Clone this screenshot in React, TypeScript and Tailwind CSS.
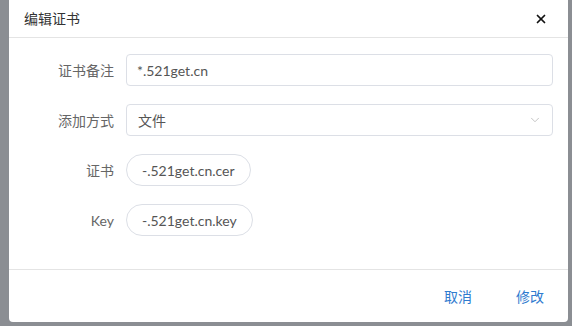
import { ChevronDown, X } from "lucide-react";

const font = { fontFamily: 'Lato, "Noto Sans CJK SC", sans-serif' };

function Label({ children }: { children: React.ReactNode }) {
  return (
    <div className="w-[117px] shrink-0 pr-[12px] text-right text-[14px] text-[#666]">
      {children}
    </div>
  );
}

export default function App() {
  return (
    <div className="h-[326px] w-[572px] bg-[#8b8e93] pl-[9px] pr-[4px]" style={font}>
      <div className="flex h-[322px] flex-col rounded-b-[4px] bg-white">
        <div className="flex h-[38px] items-center justify-between border-b border-[#e4e4e4] pl-[15px] pr-[20px]">
          <span className="text-[14px] text-[#333]">编辑证书</span>
          <X className="h-[14px] w-[14px] text-[#111]" strokeWidth={3} />
        </div>
        <div className="flex flex-1 flex-col gap-[18px] pt-[16px] pr-[15px]">
          <div className="flex items-center">
            <Label>证书备注</Label>
            <div className="flex h-[32px] flex-1 items-center rounded-[4px] border border-[#dcdfe6] px-[10px] text-[14px] text-[#555]">
              *.521get.cn
            </div>
          </div>
          <div className="flex items-center">
            <Label>添加方式</Label>
            <div className="flex h-[32px] flex-1 items-center justify-between rounded-[4px] border border-[#dcdfe6] pl-[11px] pr-[10px] text-[14px] text-[#555]">
              <span>文件</span>
              <ChevronDown className="h-[14px] w-[14px] text-[#bbb]" strokeWidth={1.5} />
            </div>
          </div>
          <div className="flex items-center">
            <Label>证书</Label>
            <div className="flex h-[32px] items-center rounded-full border border-[#dcdfe6] px-[15px] text-[14px] text-[#555]">
              -.521get.cn.cer
            </div>
          </div>
          <div className="flex items-center">
            <Label>Key</Label>
            <div className="flex h-[32px] items-center rounded-full border border-[#dcdfe6] px-[15px] text-[14px] text-[#555]">
              -.521get.cn.key
            </div>
          </div>
        </div>
        <div className="flex h-[53px] items-center justify-end gap-[44px] border-t border-[#e4e4e4] pr-[24px] text-[14px] text-[#2f7bcf]">
          <span>取消</span>
          <span>修改</span>
        </div>
      </div>
    </div>
  );
}
